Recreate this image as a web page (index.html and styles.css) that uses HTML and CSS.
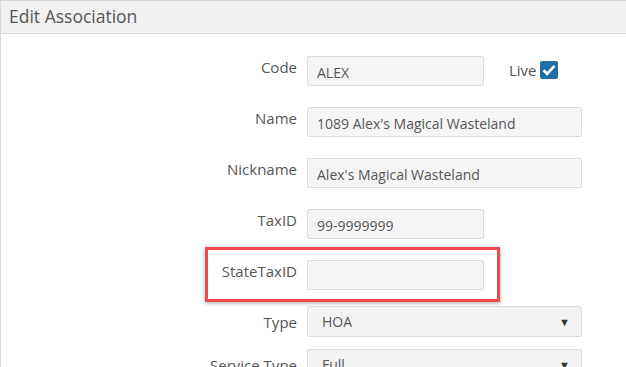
FILE: index.html
```html
<!DOCTYPE html>
<html lang="en">
<head>
    <meta charset="UTF-8">
    <title>Edit Association</title>
    <link rel="stylesheet" href="styles.css">
</head>
<body>
    <div class="panel">
        <div class="panel-heading">Edit Association</div>
        <div class="panel-body">
            <div class="form-row">
                <label class="field-label">Code</label>
                <div class="field-wrap">
                    <input class="field field-short" type="text" value="ALEX" readonly>
                    <span class="live">Live
                        <span class="checkbox">
                            <svg width="14" height="12" viewBox="0 0 14 12"><path d="M1.5 6.2 L5.2 9.8 L12.5 1.8" fill="none" stroke="#fff" stroke-width="2.6"/></svg>
                        </span>
                    </span>
                </div>
            </div>
            <div class="form-row">
                <label class="field-label">Name</label>
                <div class="field-wrap">
                    <input class="field" type="text" value="1089 Alex's Magical Wasteland" readonly>
                </div>
            </div>
            <div class="form-row">
                <label class="field-label">Nickname</label>
                <div class="field-wrap">
                    <input class="field" type="text" value="Alex's Magical Wasteland" readonly>
                </div>
            </div>
            <div class="form-row">
                <label class="field-label">TaxID</label>
                <div class="field-wrap">
                    <input class="field field-short" type="text" value="99-9999999" readonly>
                </div>
            </div>
            <div class="form-row marked">
                <label class="field-label">StateTaxID</label>
                <div class="field-wrap">
                    <input class="field field-short" type="text" value="" readonly>
                </div>
            </div>
            <div class="form-row select-row">
                <label class="field-label">Type</label>
                <div class="field-wrap">
                    <div class="select">HOA<span class="caret">&#9660;</span></div>
                </div>
            </div>
            <div class="form-row select-row">
                <label class="field-label">Service Type</label>
                <div class="field-wrap">
                    <div class="select">Full<span class="caret">&#9660;</span></div>
                </div>
            </div>
        </div>
    </div>
</body>
</html>
```

FILE: styles.css
```css
body {
    margin: 0;
    padding: 0;
    font-family: "Open Sans", Arial, sans-serif;
    color: #555;
    background-color: #fff;
    overflow: hidden;
}

.panel {
    border-left: 1px solid #d9d9d9;
    border-top: 1px solid #d9d9d9;
    height: 400px;
}

.panel-heading {
    height: 32px;
    line-height: 31px;
    padding-left: 8px;
    font-size: 17.5px;
    color: #555;
    background-color: #f1f1f1;
    border-bottom: 1px solid #d9d9d9;
}

.panel-body {
    padding-top: 22px;
}

.form-row {
    display: grid;
    grid-template-columns: 296px 1fr;
    column-gap: 10px;
    margin-bottom: 21px;
    position: relative;
}

.field-label {
    text-align: right;
    font-size: 15px;
    line-height: 20px;
    padding-top: 1px;
    color: #555;
}

.field-wrap {
    display: flex;
    align-items: center;
}

.field {
    box-sizing: border-box;
    width: 275px;
    height: 30px;
    padding: 2px 9px 0;
    font-family: "Open Sans", Arial, sans-serif;
    font-size: 14px;
    color: #555;
    background-color: #f5f5f5;
    border: 1px solid #dcdcdc;
    border-radius: 2px;
    outline: none;
}

.field-short {
    width: 177px;
}

.live {
    display: flex;
    align-items: center;
    margin-left: 25px;
    margin-top: -2px;
    font-size: 15px;
    color: #555;
}

.checkbox {
    display: flex;
    align-items: center;
    justify-content: center;
    width: 18px;
    height: 18px;
    margin-left: 3px;
    background-color: #1f6fa3;
    border-radius: 2px;
}

/* annotation box drawn over the StateTaxID row */
.marked {
    margin-bottom: 16px;
}

.marked::after {
    content: "";
    position: absolute;
    left: 204px;
    top: -13px;
    width: 289px;
    height: 49px;
    border: 3px solid #ef4a4c;
    box-shadow: 0 1px 4px rgba(0, 0, 0, 0.35);
}

.select-row {
    margin-bottom: 12px;
}

.select-row .field-label {
    padding-top: 6px;
}

.select {
    box-sizing: border-box;
    width: 275px;
    height: 31px;
    padding: 0 11px 0 14px;
    display: flex;
    align-items: center;
    justify-content: space-between;
    font-size: 14px;
    color: #555;
    background-color: #f3f3f3;
    border: 1px solid #dcdcdc;
    border-radius: 2px;
}

.caret {
    font-size: 11px;
    color: #333;
}
```
